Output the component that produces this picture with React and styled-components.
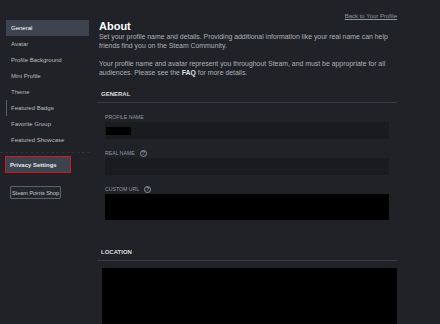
import { createGlobalStyle, styled } from 'styled-components';

const GlobalStyle = createGlobalStyle`
    html, body {
        margin: 0;
        padding: 0;
        background: #202227;
        overflow: hidden;
    }
    body {
        font-family: "Liberation Sans", Arial, sans-serif;
        color: #acb2b8;
    }
`;

const Page = styled.div`
    display: flex;
    align-items: flex-start;
    width: 440px;
    height: 324px;
    overflow: hidden;
`;

const Sidebar = styled.aside`
    width: 90px;
    flex-shrink: 0;
    padding-top: 20px;
`;

const NavList = styled.ul`
    list-style: none;
    margin: 0;
    padding: 0 0 0 6px;
`;

const NavItem = styled.li`
    box-sizing: border-box;
    width: 83px;
    height: 16px;
    display: flex;
    align-items: center;
    padding-left: 4px;
    font-size: 6px;
    color: ${(p) => (p.$active ? '#ffffff' : '#b8bcbf')};
    background: ${(p) => (p.$active ? '#3d4450' : 'transparent')};
    border-left: 1px solid ${(p) => (p.$marked ? '#5c6168' : 'transparent')};
`;

const Divider = styled.div`
    margin: 4px 0 3px;
    border-top: 1px dashed #2e3136;
    width: 90px;
`;

const PrivacyItem = styled.div`
    box-sizing: border-box;
    margin-left: 5px;
    width: 66px;
    height: 17px;
    display: flex;
    align-items: center;
    padding-left: 4px;
    font-size: 6px;
    font-weight: 700;
    color: #e6e8ea;
    background: #3d4450;
    border: 1px solid #d0191c;
`;

const ShopButton = styled.button`
    box-sizing: border-box;
    margin: 13px 0 0 10px;
    width: 51px;
    height: 13px;
    padding: 0;
    font-family: inherit;
    font-size: 5.5px;
    color: #c6ccd2;
    background: #23262b;
    border: 1px solid #5d636a;
    border-radius: 1px;
`;

const Main = styled.main`
    width: 300px;
    margin-left: 7px;
    padding-top: 12px;
`;

const TopBar = styled.div`
    display: flex;
    justify-content: flex-end;
    height: 8px;
    line-height: 8px;
`;

const BackLink = styled.a`
    font-size: 6px;
    color: #8f98a0;
    text-decoration: underline;
`;

const Title = styled.h1`
    margin: 0 0 0 2px;
    font-size: 11px;
    line-height: 12px;
    font-weight: 700;
    color: #ffffff;
`;

const Intro = styled.p`
    margin: 0 0 9px 2px;
    font-size: 6.9px;
    line-height: 9px;
    white-space: nowrap;
    color: #acb2b8;

    & b {
        color: #dfe3e6;
        font-weight: 700;
    }
`;

const SectionHeader = styled.h2`
    box-sizing: border-box;
    margin: ${(p) => p.$top}px 0 0;
    height: 17px;
    display: flex;
    align-items: center;
    padding-left: 4px;
    font-size: 6px;
    font-weight: 700;
    color: #dcdedf;
    border-bottom: 1px solid #3a3d43;
`;

const SectionBody = styled.div`
    padding: 10px 8px 0;
    display: flex;
    flex-direction: column;
    gap: 10px;
`;

const Field = styled.div`
    display: flex;
    flex-direction: column;
    gap: 1px;
`;

const Label = styled.div`
    display: flex;
    align-items: center;
    gap: 5px;
    height: 8px;
    font-size: 5.2px;
    color: #8f98a0;
    text-transform: uppercase;
`;

const Help = styled.span`
    box-sizing: border-box;
    width: 7px;
    height: 7px;
    border: 1px solid #8f98a0;
    border-radius: 50%;
    display: flex;
    align-items: center;
    justify-content: center;
    font-size: 4.5px;
    font-weight: 700;
    color: #8f98a0;
`;

const Input = styled.div`
    box-sizing: border-box;
    height: ${(p) => p.$h || 17}px;
    padding: 5px 0 0 1px;
    background: ${(p) => (p.$redacted ? '#000000' : '#1a1b1f')};
`;

const Redact = styled.div`
    width: 25px;
    height: 8px;
    background: #000000;
`;

const LocationBlock = styled.div`
    margin: 7px 0 0 5px;
    height: 80px;
    background: #000000;
`;

const navItems = [
    'General',
    'Avatar',
    'Profile Background',
    'Mini Profile',
    'Theme',
    'Featured Badge',
    'Favorite Group',
    'Featured Showcase',
];

function App() {
    return (
        <>
            <GlobalStyle />
            <Page>
                <Sidebar>
                    <NavList>
                        {navItems.map((name, i) => (
                            <NavItem key={name} $active={i === 0} $marked={name === 'Featured Badge'}>
                                {name}
                            </NavItem>
                        ))}
                    </NavList>
                    <Divider />
                    <PrivacyItem>Privacy Settings</PrivacyItem>
                    <ShopButton>Steam Points Shop</ShopButton>
                </Sidebar>
                <Main>
                    <TopBar>
                        <BackLink href="#!">Back to Your Profile</BackLink>
                    </TopBar>
                    <Title>About</Title>
                    <Intro>
                        Set your profile name and details. Providing additional information like your real name can help
                        <br />
                        friends find you on the Steam Community.
                    </Intro>
                    <Intro>
                        Your profile name and avatar represent you throughout Steam, and must be appropriate for all
                        <br />
                        audiences. Please see the <b>FAQ</b> for more details.
                    </Intro>
                    <SectionHeader $top={0}>GENERAL</SectionHeader>
                    <SectionBody>
                        <Field>
                            <Label>Profile Name</Label>
                            <Input>
                                <Redact />
                            </Input>
                        </Field>
                        <Field>
                            <Label>
                                Real Name <Help>?</Help>
                            </Label>
                            <Input />
                        </Field>
                        <Field>
                            <Label>
                                Custom URL <Help>?</Help>
                            </Label>
                            <Input $redacted $h={26} />
                        </Field>
                    </SectionBody>
                    <SectionHeader $top={24}>LOCATION</SectionHeader>
                    <LocationBlock />
                </Main>
            </Page>
        </>
    );
}

export default App;
